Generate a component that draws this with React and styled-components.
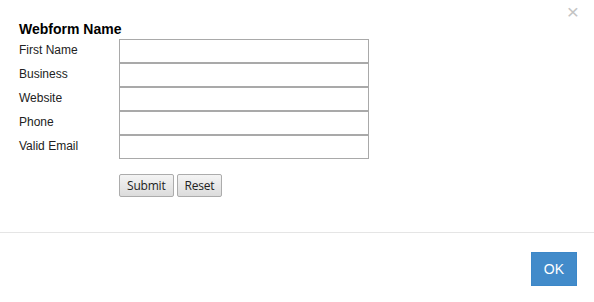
import { Fragment } from "react";
import styled, { createGlobalStyle } from "styled-components";

const GlobalStyle = createGlobalStyle`
  html, body {
    margin: 0;
    background: #fff;
  }
  body {
    font-family: "Liberation Sans", Arial, sans-serif;
    color: #000;
  }
`;

const Dialog = styled.div`
  position: relative;
  width: 594px;
  height: 302px;
  display: flex;
  flex-direction: column;
  background: #fff;
`;

const CloseButton = styled.button`
  position: absolute;
  top: 1px;
  right: 15px;
  padding: 0;
  border: none;
  background: none;
  font-family: "Liberation Sans", Arial, sans-serif;
  font-size: 21px;
  line-height: 21px;
  color: #c4c4c4;
  cursor: pointer;
`;

const Content = styled.div`
  padding: 21px 19px 35px;
`;

const Title = styled.h4`
  margin: 0 0 2px;
  font-size: 14px;
  line-height: 16px;
  font-weight: bold;
`;

const FormGrid = styled.div`
  display: grid;
  grid-template-columns: 100px 250px;
  grid-auto-rows: 24px;
`;

const Label = styled.label`
  font-size: 12px;
  line-height: 23px;
  color: #222;
`;

const Input = styled.input`
  box-sizing: border-box;
  width: 250px;
  height: 24px;
  margin: 0;
  border: 1px solid #a9a9a9;
  background: #fff;
  outline: none;
`;

const ButtonRow = styled.div`
  display: flex;
  gap: 3px;
  margin-top: 15px;
  padding-left: 100px;
`;

const FormButton = styled.button`
  box-sizing: border-box;
  height: 23px;
  padding: 0 7px;
  border: 1px solid #acacac;
  border-radius: 2px;
  background: linear-gradient(#f4f4f4, #dcdcdc);
  font-family: "Open Sans", sans-serif;
  font-size: 12px;
  letter-spacing: -0.2px;
  color: #222;
  cursor: pointer;
`;

const Footer = styled.div`
  display: flex;
  justify-content: flex-end;
  padding: 19px 17px 16px;
  border-top: 1px solid #e5e5e5;
`;

const OkButton = styled.button`
  box-sizing: border-box;
  height: 34px;
  padding: 6px 12px;
  border: 1px solid #3c87c8;
  border-radius: 0;
  background: #428bca;
  color: #fff;
  font-family: "Liberation Sans", Arial, sans-serif;
  font-size: 14px;
  line-height: 20px;
  cursor: pointer;
`;

const fields = ["First Name", "Business", "Website", "Phone", "Valid Email"];

const App = () => {
  return (
    <Dialog>
      <GlobalStyle />
      <CloseButton aria-label="Close">×</CloseButton>
      <Content>
        <Title>Webform Name</Title>
        <FormGrid>
          {fields.map((field) => (
            <Fragment key={field}>
              <Label>{field}</Label>
              <Input type="text" />
            </Fragment>
          ))}
        </FormGrid>
        <ButtonRow>
          <FormButton type="submit">Submit</FormButton>
          <FormButton type="reset">Reset</FormButton>
        </ButtonRow>
      </Content>
      <Footer>
        <OkButton>OK</OkButton>
      </Footer>
    </Dialog>
  );
};

export default App;
